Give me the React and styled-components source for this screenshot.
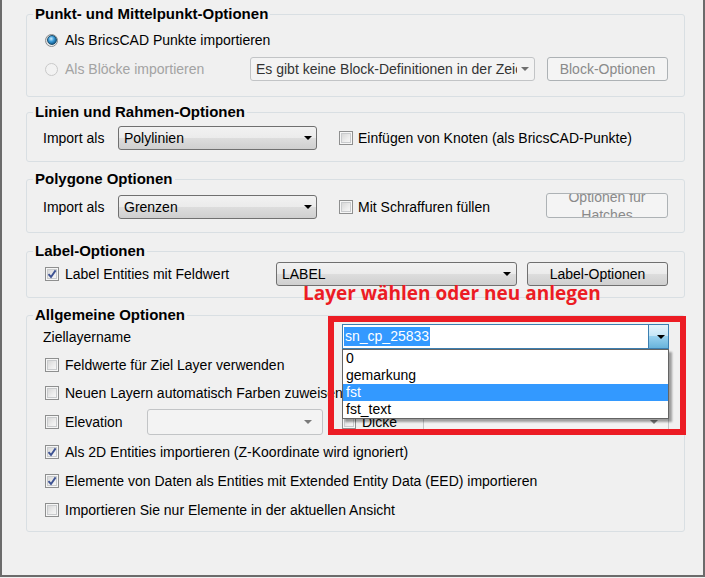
import React from "react";
import styled, { createGlobalStyle } from "styled-components";

const GlobalStyle = createGlobalStyle`
  html, body { margin: 0; padding: 0; background: #f0f0f0; }
  body { font-family: "Liberation Sans", Arial, sans-serif; font-size: 14px; color: #000; }
  * { box-sizing: border-box; }
`;

const Window = styled.div`
  position: relative;
  width: 705px;
  height: 577px;
  background: #f0f0f0;
  border-left: 2px solid #6b6b6b;
  border-right: 2px solid #6b6b6b;
  border-bottom: 2px solid #6b6b6b;
  padding: 6px 18px 0 24px;
  display: flex;
  flex-direction: column;
`;

const Group = styled.fieldset`
  flex: none;
  margin: ${(p) => p.$mt || 0}px 0 0;
  padding: 0;
  min-width: 0;
  height: ${(p) => p.$h}px;
  border: 1px solid #d9dfe3;
  border-radius: 3px;
`;

const Legend = styled.legend`
  margin-left: 6px;
  padding: 0 2px;
  font-weight: bold;
  font-size: 15px;
  line-height: 16px;
`;

const Body = styled.div`
  display: flex;
  flex-direction: column;
  gap: ${(p) => p.$gap || 0}px;
  padding: ${(p) => p.$pt || 0}px 15px 0 18px;
`;

const Row = styled.div`
  display: flex;
  align-items: center;
  height: ${(p) => p.$h || 24}px;
  margin-top: ${(p) => p.$mt || 0}px;
`;

const Field = styled.label`
  display: flex;
  align-items: center;
  flex: none;
  width: ${(p) => (p.$w ? `${p.$w}px` : "auto")};
  margin-left: ${(p) => p.$ml || 0}px;
  white-space: nowrap;
  color: ${(p) => (p.$disabled ? "#a3a3a3" : "#000")};
`;

const Caption = styled.span`
  flex: none;
  width: ${(p) => p.$w}px;
  margin-left: -2px;
  white-space: nowrap;
`;

const Box = styled.span`
  position: relative;
  flex: none;
  width: 14px;
  height: 14px;
  margin-right: ${(p) => p.$gap || 6}px;
  border: 1px solid #8e8f8f;
  background: linear-gradient(135deg, #d0d0d0 0%, #eeeeee 60%, #fbfbfb 100%);
  box-shadow: inset 0 0 0 1px #f6f6f6, inset 0 0 0 2px #c9cbcd;
  svg { position: absolute; left: 0; top: 0; }
`;

const RadioDot = styled.span`
  flex: none;
  width: 13px;
  height: 13px;
  margin-right: 7px;
  border-radius: 50%;
  border: 1px solid ${(p) => (p.$disabled ? "#c9c9c9" : "#8a8c8e")};
  background: ${(p) =>
    p.$disabled ? "#f2f2f2" : "linear-gradient(135deg, #d5d5d5, #fafafa)"};
  display: flex;
  align-items: center;
  justify-content: center;
  &::after {
    content: "";
    display: ${(p) => (p.$checked ? "block" : "none")};
    width: 8px;
    height: 8px;
    border-radius: 50%;
    border: 1px solid #1c4f6e;
    background: radial-gradient(circle at 40% 35%, #c9ecff 0%, #3a9ad6 40%, #0d5585 80%, #0a3f63 100%);
  }
`;

const Combo = styled.div`
  flex: none;
  width: ${(p) => p.$w}px;
  height: ${(p) => p.$h || 24}px;
  margin-left: ${(p) => p.$ml || 0}px;
  display: flex;
  align-items: center;
  justify-content: space-between;
  padding: 0 ${(p) => p.$pr || 5}px 0 5px;
  border-radius: 3px;
  border: 1px solid ${(p) => (p.$flat ? "#c2c4c6" : "#707070")};
  background: ${(p) =>
    p.$flat
      ? "#f3f3f3"
      : "linear-gradient(to bottom, #f2f2f2 0%, #ebebeb 50%, #dddddd 50%, #cfcfcf 100%)"};
  color: ${(p) => (p.$flat ? "#333" : "#000")};
  white-space: nowrap;
  overflow: hidden;
`;

const ComboText = styled.span`
  overflow: hidden;
  flex: 1;
  min-width: 0;
`;

const Arrow = styled.span`
  flex: none;
  width: 0;
  height: 0;
  margin-left: 4px;
  border-left: 4px solid transparent;
  border-right: 4px solid transparent;
  border-top: 4px solid ${(p) => p.$color || "#000"};
`;

const Button = styled.div`
  flex: none;
  width: ${(p) => p.$w}px;
  height: ${(p) => p.$h || 24}px;
  margin-left: ${(p) => p.$ml || 0}px;
  align-self: ${(p) => (p.$top ? "flex-start" : "center")};
  margin-top: ${(p) => p.$mt || 0}px;
  display: flex;
  align-items: center;
  justify-content: center;
  text-align: center;
  line-height: ${(p) => p.$lh || 16}px;
  overflow: hidden;
  border-radius: 3px;
  border: 1px solid ${(p) => (p.$disabled ? "#adb2b5" : "#707070")};
  background: ${(p) =>
    p.$disabled
      ? "#f4f4f4"
      : "linear-gradient(to bottom, #f2f2f2 0%, #ebebeb 50%, #dddddd 50%, #cfcfcf 100%)"};
  color: ${(p) => (p.$disabled ? "#8a8a8a" : "#000")};
`;

const EditCombo = styled.div`
  position: relative;
  flex: none;
  width: 327px;
  height: 25px;
  margin-left: auto;
  align-self: flex-start;
  margin-top: -1px;
  display: flex;
  border: 1px solid #3c7fb1;
  background: #fff;
`;

const EditText = styled.div`
  flex: 1;
  padding: 2px 0 0 1px;
  line-height: 19px;
`;

const Selected = styled.span`
  display: inline-block;
  padding: 0 1px;
  background: #3399ff;
  color: #fff;
`;

const DropButton = styled.div`
  flex: none;
  width: 20px;
  display: flex;
  align-items: center;
  justify-content: center;
  border-left: 1px solid #3c7fb1;
  background: linear-gradient(to bottom, #e5f4fc 0%, #c4e5f6 50%, #98d1ef 50%, #68b3db 100%);
`;

const ListPopup = styled.ul`
  position: absolute;
  left: -1px;
  top: 24px;
  width: 327px;
  margin: 0;
  padding: 0;
  list-style: none;
  background: #fff;
  border: 1px solid #646464;
  box-shadow: 3px 3px 2px rgba(0, 0, 0, 0.35);
  z-index: 2;
`;

const ListItem = styled.li`
  height: 17px;
  line-height: 17px;
  padding-left: 3px;
  background: ${(p) => (p.$active ? "#3399ff" : "transparent")};
  color: ${(p) => (p.$active ? "#fff" : "#000")};
`;

const Annotation = styled.div`
  position: absolute;
  left: 301px;
  top: 282px;
  font-family: "Open Sans", "Liberation Sans", sans-serif;
  font-weight: 700;
  font-size: 19px;
  line-height: 23px;
  color: #ec1c24;
  white-space: nowrap;
  z-index: 3;
`;

const Highlight = styled.div`
  position: absolute;
  left: 326px;
  top: 316px;
  width: 358px;
  height: 119px;
  border: 6px solid #ec1c24;
  z-index: 3;
  pointer-events: none;
`;

const Check = ({ checked, gap }) => (
  <Box $gap={gap}>
    {checked && (
      <svg width="12" height="12" viewBox="0 0 12 12">
        <path d="M2.5 6.2 L5 9 L9.6 2.4" fill="none" stroke="#3e5393" strokeWidth="1.9" strokeLinejoin="miter" />
      </svg>
    )}
  </Box>
);

export default function App() {
  return (
    <>
      <GlobalStyle />
      <Window>
        <Group $h={91}>
          <Legend>Punkt- und Mittelpunkt-Optionen</Legend>
          <Body $pt={6} $gap={5}>
            <Row>
              <Field>
                <RadioDot $checked />
                Als BricsCAD Punkte importieren
              </Field>
            </Row>
            <Row>
              <Field $w={205} $disabled>
                <RadioDot $disabled />
                Als Blöcke importieren
              </Field>
              <Combo $w={285} $flat>
                <ComboText>Es gibt keine Block-Definitionen in der Zeichnung</ComboText>
                <Arrow $color="#6f6f6f" />
              </Combo>
              <Button $w={121} $ml={12} $disabled>
                Block-Optionen
              </Button>
            </Row>
          </Body>
        </Group>

        <Group $h={58} $mt={7}>
          <Legend>Linien und Rahmen-Optionen</Legend>
          <Body $pt={6}>
            <Row>
              <Caption $w={75}>Import als</Caption>
              <Combo $w={199} $pr={4}>
                <ComboText>Polylinien</ComboText>
                <Arrow />
              </Combo>
              <Field $ml={22}>
                <Check gap={5} />
                Einfügen von Knoten (als BricsCAD-Punkte)
              </Field>
            </Row>
          </Body>
        </Group>

        <Group $h={62} $mt={9}>
          <Legend>Polygone Optionen</Legend>
          <Body $pt={7}>
            <Row $h={26}>
              <Caption $w={75}>Import als</Caption>
              <Combo $w={199} $pr={4}>
                <ComboText>Grenzen</ComboText>
                <Arrow />
              </Combo>
              <Field $ml={22} $w={207}>
                <Check gap={5} />
                Mit Schraffuren füllen
              </Field>
              <Button $w={122} $h={25} $top $mt={-1} $lh={18} $disabled>
                Optionen für Hatches
              </Button>
            </Row>
          </Body>
        </Group>

        <Group $h={55} $mt={10}>
          <Legend>Label-Optionen</Legend>
          <Body $pt={3}>
            <Row>
              <Field $w={231}>
                <Check checked />
                Label Entities mit Feldwert
              </Field>
              <Combo $w={241}>
                <ComboText>LABEL</ComboText>
                <Arrow />
              </Combo>
              <Button $w={141} $ml={10}>
                Label-Optionen
              </Button>
            </Row>
          </Body>
        </Group>

        <Group $h={225} $mt={9}>
          <Legend>Allgemeine Optionen</Legend>
          <Body $pt={2} $gap={4}>
            <Row>
              <Caption $w={120}>Ziellayername</Caption>
              <EditCombo>
                <EditText>
                  <Selected>sn_cp_25833</Selected>
                </EditText>
                <DropButton>
                  <Arrow />
                </DropButton>
                <ListPopup>
                  <ListItem>0</ListItem>
                  <ListItem>gemarkung</ListItem>
                  <ListItem $active>fst</ListItem>
                  <ListItem>fst_text</ListItem>
                </ListPopup>
              </EditCombo>
            </Row>
            <Row>
              <Field>
                <Check />
                Feldwerte für Ziel Layer verwenden
              </Field>
            </Row>
            <Row>
              <Field>
                <Check />
                Neuen Layern automatisch Farben zuweisen
              </Field>
            </Row>
            <Row $h={26}>
              <Field $w={102}>
                <Check />
                Elevation
              </Field>
              <Combo $w={176} $h={26} $flat $pr={10}>
                <ComboText />
                <Arrow $color="#7a7a7a" />
              </Combo>
              <Field $w={81} $ml={19}>
                <Check />
                Dicke
              </Field>
              <Combo $w={246} $h={26} $flat $pr={10}>
                <ComboText />
                <Arrow $color="#7a7a7a" />
              </Combo>
            </Row>
            <Row $mt={1}>
              <Field>
                <Check checked />
                Als 2D Entities importieren (Z-Koordinate wird ignoriert)
              </Field>
            </Row>
            <Row $mt={1}>
              <Field>
                <Check checked />
                Elemente von Daten als Entities mit Extended Entity Data (EED) importieren
              </Field>
            </Row>
            <Row $mt={1}>
              <Field>
                <Check />
                Importieren Sie nur Elemente in der aktuellen Ansicht
              </Field>
            </Row>
          </Body>
        </Group>

        <Annotation>Layer wählen oder neu anlegen</Annotation>
        <Highlight />
      </Window>
    </>
  );
}
